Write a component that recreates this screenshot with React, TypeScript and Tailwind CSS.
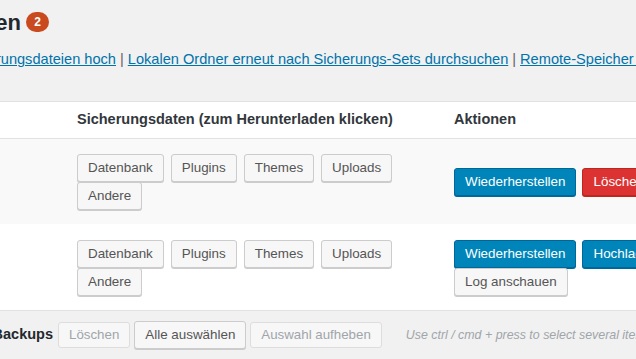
import React from "react";

const font = { fontFamily: '"Liberation Sans", Arial, sans-serif' };

function Btn({ children }: { children: React.ReactNode }) {
  return (
    <span className="inline-flex shrink-0 items-center justify-center h-[28px] px-[10px] rounded-[3px] border border-[#cccccc] bg-[#f7f7f7] text-[#555555] text-[13.4px] shadow-[0_1px_0_#cccccc] whitespace-nowrap">
      {children}
    </span>
  );
}

function Primary({ children, red }: { children: React.ReactNode; red?: boolean }) {
  return (
    <span
      className={
        red
          ? "inline-flex shrink-0 items-center h-[28px] px-[10px] rounded-[3px] border border-[#ba281e] bg-[#dc3232] text-white text-[13.4px] shadow-[0_1px_0_#ba281e] whitespace-nowrap"
          : "inline-flex shrink-0 items-center h-[28px] px-[10px] rounded-[3px] border border-[#006799] bg-[#0085ba] text-white text-[13.4px] shadow-[0_1px_0_#006799] whitespace-nowrap"
      }
    >
      {children}
    </span>
  );
}

function Disabled({ children }: { children: React.ReactNode }) {
  return (
    <span className="inline-flex shrink-0 items-center h-[26px] px-[10px] rounded-[3px] border border-[#dddddd] bg-[#f7f7f7] text-[#a0a5aa] text-[13.3px] whitespace-nowrap">
      {children}
    </span>
  );
}

function DataCell() {
  return (
    <div className="flex flex-col">
      <div className="flex gap-[7px]">
        <Btn>Datenbank</Btn>
        <Btn>Plugins</Btn>
        <Btn>Themes</Btn>
        <Btn>Uploads</Btn>
      </div>
      <div className="flex">
        <Btn>Andere</Btn>
      </div>
    </div>
  );
}

export default function App() {
  return (
    <div
      className="w-[636px] h-[359px] overflow-hidden bg-[#f1f1f1] text-[#444444]"
      style={font}
    >
      <div className="flex items-center h-[42px] pt-[2px]">
        <div className="w-[21px] shrink-0 flex justify-end">
          <span className="text-[22px] font-bold text-[#23282d] whitespace-nowrap">
            Vorhandene Sicherungen
          </span>
        </div>
        <span className="ml-[5px] inline-flex items-center justify-center w-[23px] h-[20px] rounded-full bg-[#ca4a1f] text-white text-[12px] font-bold">
          2
        </span>
      </div>
      <div className="flex items-center h-[36px] text-[14.6px] whitespace-nowrap">
        <div className="w-[116px] shrink-0 flex justify-end">
          <span className="text-[#0073aa] underline whitespace-nowrap">Lade Sicherungsdateien hoch</span>
        </div>
        <span className="mx-[4px] text-[#666]">|</span>
        <span className="text-[#0073aa] underline shrink-0">
          Lokalen Ordner erneut nach Sicherungs-Sets durchsuchen
        </span>
        <span className="mx-[4px] text-[#666]">|</span>
        <span className="text-[#0073aa] underline shrink-0">Remote-Speicher durchsuchen</span>
      </div>
      <div className="mt-[23px] border-t border-[#e1e1e1]">
        <div className="flex h-[37px] items-center bg-white border-b border-[#e1e1e1] text-[14.5px] font-bold text-[#32373c] whitespace-nowrap">
          <div className="w-[77px] shrink-0" />
          <div className="w-[377px] shrink-0">Sicherungsdaten (zum Herunterladen klicken)</div>
          <div>Aktionen</div>
        </div>
        <div className="flex items-center bg-[#f9f9f9] pt-[15px] pb-[14px]">
          <div className="w-[77px] shrink-0" />
          <div className="w-[377px] shrink-0">
            <DataCell />
          </div>
          <div className="flex gap-[6px]">
            <Primary>Wiederherstellen</Primary>
            <Primary red>Löschen</Primary>
          </div>
        </div>
        <div className="flex items-center bg-white pt-[16px] pb-[14px] border-b border-[#e1e1e1]">
          <div className="w-[77px] shrink-0" />
          <div className="w-[377px] shrink-0">
            <DataCell />
          </div>
          <div className="flex flex-col items-start">
            <div className="flex gap-[6px]">
              <Primary>Wiederherstellen</Primary>
              <Primary>Hochladen</Primary>
            </div>
            <Btn>Log anschauen</Btn>
          </div>
        </div>
        <div className="flex items-center h-[48px] gap-[4px] whitespace-nowrap">
          <div className="w-[53px] shrink-0 flex justify-end mr-[1px]">
            <span className="text-[14.5px] font-bold text-[#23282d] whitespace-nowrap">Ausgewählte Backups</span>
          </div>
          <Disabled>Löschen</Disabled>
          <Btn>Alle auswählen</Btn>
          <Disabled>Auswahl aufheben</Disabled>
          <span className="ml-[20px] shrink-0 text-[12.4px] italic text-[#a0a5aa]">
            Use ctrl / cmd + press to select several items
          </span>
        </div>
      </div>
    </div>
  );
}
